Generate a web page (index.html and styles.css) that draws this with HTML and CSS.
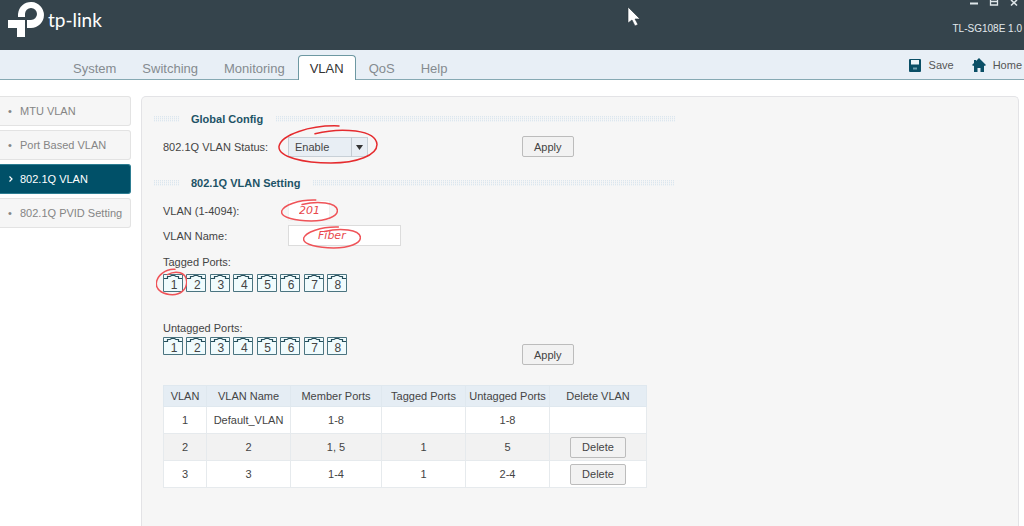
FILE: index.html
```html
<!DOCTYPE html>
<html lang="en">
<head>
<meta charset="utf-8">
<title>TL-SG108E - 802.1Q VLAN</title>
<link rel="stylesheet" href="styles.css">
</head>
<body>
<svg class="defs" aria-hidden="true">
  <symbol id="port" viewBox="0 0 20 18">
    <path d="M.5.5h19v17H.5z" fill="#f0fbfd" stroke="#4b7480"/>
    <path d="M1 4.500h3.500v-2h2.500l1.500-1h3l1.500 1h2.500v2H19" fill="none" stroke="#254e5b" stroke-width="1.200"/>
  </symbol>
  <symbol id="ring" viewBox="0 0 100 42" preserveAspectRatio="none">
    <path d="M61 2C32 1 3 11 1 23c-1 11 25 17 52 17 26 0 46-8 46-19C98 6 64 3 37 10" fill="none" stroke="currentColor" stroke-width="1.500" stroke-linecap="round" vector-effect="non-scaling-stroke"/>
  </symbol>
</svg>

<header class="top">
  <a class="brand" href="#" aria-label="tp-link">
    <svg class="brand-mark" viewBox="0 0 37 38" aria-hidden="true">
      <path d="M10 17v-3a13 13 0 1 1 13 14h-4v-8h4a6 6 0 1 0-6-6v3z" fill="#fff"/>
      <path d="M0 20h17v17H9v-9H0z" fill="#fff"/>
    </svg>
    <span class="brand-name">tp-link</span>
  </a>
  <div class="top-side">
    <div class="window-buttons">
      <button type="button" aria-label="Minimize"><svg viewBox="0 0 10 8"><path d="M1 3.500h8" stroke="#dfe6e9" stroke-width="2"/></svg></button>
      <button type="button" aria-label="Maximize"><svg viewBox="0 0 10 8"><path d="M1.500 0v5h7V0M1 1.500h8" fill="none" stroke="#dfe6e9" stroke-width="1.300"/></svg></button>
      <button type="button" aria-label="Close"><svg viewBox="0 0 10 8"><path d="m2 0 6 5.500M8 0 2 5.500" stroke="#dfe6e9" stroke-width="1.600"/></svg></button>
    </div>
    <div class="model">TL-SG108E 1.0</div>
  </div>
  <svg class="cursor" viewBox="0 0 15 21" aria-hidden="true"><path d="M1 1v16l4-3 3 6 3-1.500-3-5.500h5z" fill="#fff" stroke="#26343b" stroke-width=".6"/></svg>
</header>

<nav class="menu">
  <div class="tabs">
    <a href="#">System</a>
    <a href="#">Switching</a>
    <a href="#">Monitoring</a>
    <a href="#" class="active" aria-current="page">VLAN</a>
    <a href="#">QoS</a>
    <a href="#">Help</a>
  </div>
  <div class="tools">
    <a href="#"><svg viewBox="0 0 14 14" aria-hidden="true"><path d="M1 2q0-1 1-1h10q1 0 1 1v11q0 1-1 1H2q-1 0-1-1z" fill="#0b4f66"/><path d="M3 2h8v4.500H3z" fill="#eef5f9"/><path d="M5 9.500h4v2H5z" fill="#6fa0b0"/></svg>Save</a>
    <a href="#"><svg viewBox="0 0 14 14" aria-hidden="true"><path d="M7 0 14 7l-1.200 1-.8-.6V14H8.500v-4h-3v4H2V7.400L1.200 8 0 7l2-2V2h2v1z" fill="#0b4f66"/></svg>Home</a>
  </div>
</nav>

<div class="layout">
  <aside class="side">
    <a href="#"><span class="mark">•</span>MTU VLAN</a>
    <a href="#"><span class="mark">•</span>Port Based VLAN</a>
    <a href="#" class="active" aria-current="page"><svg class="mark" viewBox="0 0 6 8" aria-hidden="true"><path d="m1.500 1.500 2.500 2.500-2.500 2.500" fill="none" stroke="#fff" stroke-width="1.200"/></svg>802.1Q VLAN</a>
    <a href="#"><span class="mark">•</span>802.1Q PVID Setting</a>
  </aside>

  <main class="panel">
    <h2 class="section">Global Config</h2>
    <form class="row status-row">
      <label for="status">802.1Q VLAN Status:</label>
      <div class="field">
        <div class="select">
          <select id="status"><option>Enable</option><option>Disable</option></select>
          <svg class="arrow" viewBox="0 0 17 20" aria-hidden="true"><path d="M.5 0v20" stroke="#c3cbd2"/><path d="M5 8h7l-3.500 5z" fill="#333"/></svg>
        </div>
        <svg class="ring ring-status" aria-hidden="true"><use href="#ring"/></svg>
      </div>
      <button type="button" class="btn">Apply</button>
    </form>

    <h2 class="section">802.1Q VLAN Setting</h2>
    <form class="settings">
      <div class="row">
        <label for="vid">VLAN (1-4094):</label>
        <div class="field">
          <input id="vid" class="text vid" value="201">
          <svg class="ring ring-vid" aria-hidden="true"><use href="#ring"/></svg>
        </div>
      </div>
      <div class="row">
        <label for="vname">VLAN Name:</label>
        <div class="field">
          <input id="vname" class="text vname" value="Fiber">
          <svg class="ring ring-name" aria-hidden="true"><use href="#ring"/></svg>
        </div>
      </div>
      <div class="port-group tagged">
        <div class="port-title" id="tagged">Tagged Ports:</div>
        <div class="ports" role="group" aria-labelledby="tagged">
          <button type="button"><svg><use href="#port"/></svg><span>1</span></button>
          <button type="button"><svg><use href="#port"/></svg><span>2</span></button>
          <button type="button"><svg><use href="#port"/></svg><span>3</span></button>
          <button type="button"><svg><use href="#port"/></svg><span>4</span></button>
          <button type="button"><svg><use href="#port"/></svg><span>5</span></button>
          <button type="button"><svg><use href="#port"/></svg><span>6</span></button>
          <button type="button"><svg><use href="#port"/></svg><span>7</span></button>
          <button type="button"><svg><use href="#port"/></svg><span>8</span></button>
          <svg class="ring ring-port" aria-hidden="true"><use href="#ring"/></svg>
        </div>
      </div>
      <div class="row untagged">
        <div class="port-group">
          <div class="port-title" id="untagged">Untagged Ports:</div>
          <div class="ports" role="group" aria-labelledby="untagged">
            <button type="button"><svg><use href="#port"/></svg><span>1</span></button>
            <button type="button"><svg><use href="#port"/></svg><span>2</span></button>
            <button type="button"><svg><use href="#port"/></svg><span>3</span></button>
            <button type="button"><svg><use href="#port"/></svg><span>4</span></button>
            <button type="button"><svg><use href="#port"/></svg><span>5</span></button>
            <button type="button"><svg><use href="#port"/></svg><span>6</span></button>
            <button type="button"><svg><use href="#port"/></svg><span>7</span></button>
            <button type="button"><svg><use href="#port"/></svg><span>8</span></button>
          </div>
        </div>
        <button type="button" class="btn">Apply</button>
      </div>
    </form>

    <table class="vlans">
      <colgroup><col class="c-id"><col class="c-mid"><col class="c-member"><col class="c-mid"><col class="c-mid"><col class="c-delete"></colgroup>
      <thead>
        <tr><th>VLAN</th><th>VLAN Name</th><th>Member Ports</th><th>Tagged Ports</th><th>Untagged Ports</th><th>Delete VLAN</th></tr>
      </thead>
      <tbody>
        <tr><td>1</td><td>Default_VLAN</td><td>1-8</td><td></td><td>1-8</td><td></td></tr>
        <tr><td>2</td><td>2</td><td>1, 5</td><td>1</td><td>5</td><td><button type="button" class="btn">Delete</button></td></tr>
        <tr><td>3</td><td>3</td><td>1-4</td><td>1</td><td>2-4</td><td><button type="button" class="btn">Delete</button></td></tr>
      </tbody>
    </table>
  </main>
</div>
</body>
</html>
```
FILE: styles.css
```css
* { box-sizing: border-box; }

body {
  margin: 0;
  min-height: 100vh;
  display: flex;
  flex-direction: column;
  background: #fff;
  color: #444;
  font: 11px/16px "Liberation Sans", Arial, sans-serif;
}

a { color: inherit; text-decoration: none; }
button, input, select { font: inherit; color: inherit; margin: 0; }
svg { display: block; }
.defs { position: absolute; width: 0; height: 0; }

/* Header */
.top {
  position: relative;
  display: flex;
  justify-content: space-between;
  height: 50px;
  padding-left: 8px;
  background: #35444c;
}
.brand { display: flex; align-items: flex-start; gap: 3px; color: #fff; }
.brand-mark { width: 37px; height: 38px; }
.brand-name { padding-top: 8px; font: 19px/24px Lato, sans-serif; }
.top-side { display: flex; flex-direction: column; align-items: flex-end; gap: 13px; color: #e3e9ec; }
.window-buttons { display: flex; gap: 10px; padding-right: 5px; }
.window-buttons button { padding: 0; border: 0; background: none; }
.window-buttons svg { width: 10px; height: 8px; }
.model { padding-right: 2px; font-size: 10px; }
.cursor { position: absolute; left: 61.25%; top: 6px; width: 15px; height: 21px; }

/* Menu bar */
.menu {
  display: flex;
  justify-content: space-between;
  height: 30px;
  padding-left: 60px;
  background: #e8eff6;
  border-bottom: 1px solid #86a9b3;
}
.tabs { display: flex; align-items: flex-end; height: 30px; }
.tabs a { height: 25px; padding: 0 13px; color: #858b90; font-size: 13px; line-height: 28px; }
.tabs .active {
  padding: 0 11px;
  border: 1px solid #6d98a2;
  border-bottom: 0;
  border-radius: 4px 4px 0 0;
  background: #fff;
  color: #333;
  line-height: 26px;
}
.tools { display: flex; align-items: center; gap: 18px; padding-right: 2px; color: #555; }
.tools a { display: flex; align-items: center; gap: 7px; }
.tools svg { width: 14px; height: 14px; }

/* Page body */
.layout {
  flex: 1;
  display: grid;
  grid-template-columns: 131px 1fr;
  gap: 10px;
  padding: 16px 5px 0 0;
}
.side { display: flex; flex-direction: column; gap: 4px; }
.side a {
  display: flex;
  align-items: center;
  height: 30px;
  padding-left: 8px;
  border: 1px solid #e3e3e3;
  border-left: 0;
  border-radius: 0 3px 3px 0;
  background: #f6f6f6;
  color: #858585;
}
.side .active { border-color: #2d7d92; background: #005068; color: #fff; }
.side .mark { width: 6px; height: 8px; margin-right: 6px; line-height: 8px; }

.panel {
  padding: 14px 11px 20px;
  border: 1px solid #e3e3e6;
  border-bottom: 0;
  border-radius: 5px 5px 0 0;
  background: #f6f6f6;
}

.section {
  display: grid;
  grid-template-columns: 26px auto 1fr;
  align-items: center;
  gap: 12px;
  max-width: 522px;
  margin: 0;
  color: #1d5366;
  font-size: 11px;
  line-height: 16px;
}
.section::before,
.section::after {
  content: "";
  height: 6px;
  background: repeating-linear-gradient(90deg, #f6f6f6 0 1px, transparent 1px 2px),
    repeating-linear-gradient(#dce6ee 0 1px, #ebf1f5 1px 2px);
}

.row {
  display: grid;
  grid-template-columns: 125px 234px auto;
  align-items: center;
  justify-content: start;
  padding-left: 10px;
}
.status-row { padding-top: 9px; padding-bottom: 18px; }
.field { position: relative; }
.settings { display: flex; flex-direction: column; gap: 4px; padding-top: 9px; }

.btn {
  height: 21px;
  padding: 0 11px;
  border: 1px solid #bcbcbc;
  border-radius: 2px;
  background: #f2f2f2;
  color: #444;
}

.select { position: relative; width: 80px; }
.select select {
  display: block;
  appearance: none;
  width: 100%;
  height: 20px;
  padding: 0 6px;
  border: 1px solid #c8d0d7;
  border-radius: 0;
  background: #e8eef4;
}
.arrow { position: absolute; right: 0; top: 0; width: 17px; height: 20px; pointer-events: none; }

.text {
  display: block;
  height: 21px;
  border: 1px solid #dcdcdc;
  background: #fff;
  color: #e8484c;
  font: italic 11px "DejaVu Sans", sans-serif;
}
.vid { width: 42px; padding: 0 10px; border-color: #f0f0f0; }
.vname { width: 113px; padding: 0 29px; }

/* Hand-drawn rings over the fields */
.ring { position: absolute; overflow: visible; color: #ef5358; pointer-events: none; }
.ring-status { left: -10px; top: -13px; width: 100px; height: 41px; color: #e52b2e; }
.ring-vid { left: -7px; top: -1px; width: 57px; height: 23px; }
.ring-name { left: 15px; top: 1px; width: 58px; height: 23px; }
.ports .ring-port { left: -7px; top: -6px; width: 31px; height: 28px; }

/* Port pickers */
.tagged { padding: 4px 0 0 10px; }
.port-title { margin-bottom: 4px; }
.ports { position: relative; display: flex; justify-content: space-between; width: 184px; }
.ports button { position: relative; width: 20px; height: 18px; padding: 0; border: 0; background: none; }
.ports button svg { width: 20px; height: 18px; }
.ports span { position: absolute; inset: 4px 0 0 2px; font-size: 12px; line-height: 14px; }
.untagged { grid-template-columns: 359px auto; align-items: end; padding-top: 24px; }
.untagged .port-title { margin-bottom: 1px; }
.untagged .btn { margin-bottom: -10px; }

/* VLAN table */
.vlans {
  width: 484px;
  margin: 30px 0 0 10px;
  border-collapse: collapse;
  table-layout: fixed;
  background: #fff;
  text-align: center;
}
.c-id { width: 43px; }
.c-mid { width: 84px; }
.c-member { width: 91px; }
.vlans th, .vlans td { padding: 0; border: 1px solid #e6eaed; }
.vlans th { height: 21px; border-color: #dfe8ef; background: #e5edf4; font-weight: normal; white-space: nowrap; }
.vlans td { height: 27px; }
.vlans tbody tr:nth-child(even) { background: #f2f2f2; }
```
